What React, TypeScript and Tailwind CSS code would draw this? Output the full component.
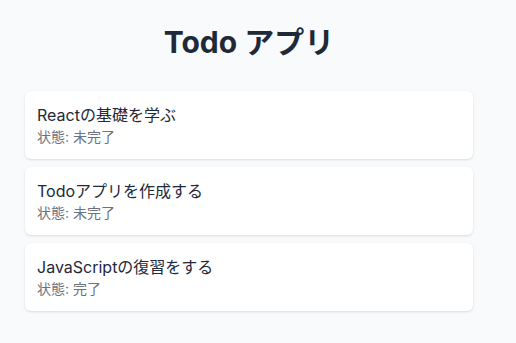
const todos = [
  { id: 1, title: 'Reactの基礎を学ぶ', completed: false },
  { id: 2, title: 'Todoアプリを作成する', completed: false },
  { id: 3, title: 'JavaScriptの復習をする', completed: true },
];

export default function App() {
  return (
    <div
      className="min-h-screen bg-gray-50 pt-6 pb-8 pl-[25px]"
      style={{ fontFamily: 'Inter, "Noto Sans CJK JP", sans-serif' }}
    >
      <div className="w-[448px]">
        {/* Header */}
        <h1 className="text-3xl font-bold text-gray-800 text-center mb-[31px]">
          Todo アプリ
        </h1>

        {/* Todo List */}
        <ul className="space-y-2">
          {todos.map((todo) => (
            <li key={todo.id} className="bg-white rounded-md shadow-sm p-3">
              <div className="text-base text-gray-800">{todo.title}</div>
              <div className="text-sm text-gray-500">
                状態: {todo.completed ? '完了' : '未完了'}
              </div>
            </li>
          ))}
        </ul>
      </div>
    </div>
  );
}
